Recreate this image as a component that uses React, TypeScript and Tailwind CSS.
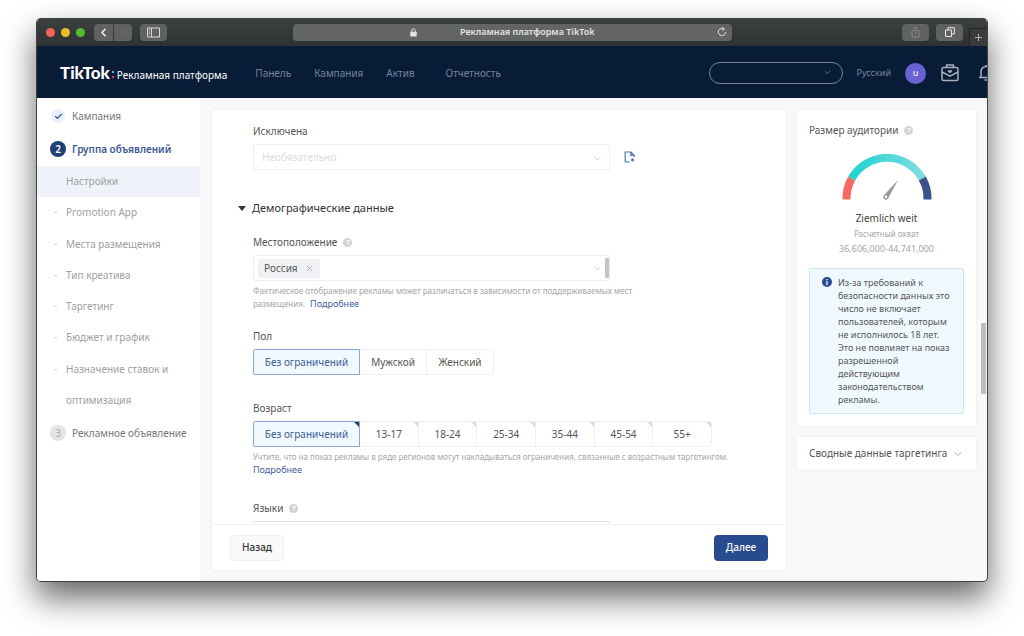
import type { ReactNode } from "react";
import { Check, ChevronDown, ChevronLeft, ChevronRight, Plus, X } from "lucide-react";

const navItems = ["Панель", "Кампания", "Актив", "Отчетность"];

const steps = [
    "Promotion App",
    "Места размещения",
    "Тип креатива",
    "Таргетинг",
    "Бюджет и график",
];

const ages = ["13-17", "18-24", "25-34", "35-44", "45-54", "55+"];

function Help() {
    return (
        <span className="flex h-[9px] w-[9px] items-center justify-center rounded-full bg-[#d2d2d2] text-[7px] font-bold leading-none text-white">
            ?
        </span>
    );
}

function TitleBar() {
    return (
        <div className="flex h-7 shrink-0 items-center bg-gradient-to-b from-[#3d4140] to-[#2f3132] pl-[9px]">
            <div className="flex gap-[6px]">
                <span className="h-[9px] w-[9px] rounded-full bg-[#f9605a]" />
                <span className="h-[9px] w-[9px] rounded-full bg-[#e5c02b]" />
                <span className="h-[9px] w-[9px] rounded-full bg-[#55bb2e]" />
            </div>
            <div className="ml-[9px] flex h-[17px] gap-px">
                <button aria-label="Назад" className="flex w-[19px] items-center justify-center rounded-l-sm bg-[#606261] text-[#eee]">
                    <ChevronLeft size={13} strokeWidth={3} />
                </button>
                <button aria-label="Вперед" className="flex w-[18px] items-center justify-center rounded-r-sm bg-[#606261] text-[#777978]">
                    <ChevronRight size={12} />
                </button>
            </div>
            <button aria-label="Боковая панель" className="ml-2 flex h-[17px] w-[27px] items-center justify-center rounded-sm bg-[#606261]">
                <svg width="13" height="11" viewBox="0 0 13 11" fill="none" stroke="#d8d8d8">
                    <path d="M.5 1h12v9H.5zM4.5 1v9M1.8 3h1.4M1.8 5h1.4M1.8 7h1.4" />
                </svg>
            </button>
            <div className="ml-[126px] flex h-[17px] min-w-0 flex-1 items-center rounded-sm bg-[#636564] pl-[117px] pr-[5px] text-[#e4e4e4]">
                <svg width="7" height="9" viewBox="0 0 7 9">
                    <path d="M1.8 4V2.5a1.7 1.7 0 0 1 3.4 0V4" fill="none" stroke="currentColor" />
                    <rect x=".3" y="3.7" width="6.4" height="4.8" rx=".6" fill="currentColor" />
                </svg>
                <span className="ml-[43px] flex-1 truncate text-[9px] font-semibold">Рекламная платформа TikTok</span>
                <svg width="10" height="10" viewBox="0 0 10 10" fill="none" stroke="currentColor">
                    <path d="M8.5 5A3.6 3.6 0 1 1 7 2.1" />
                    <path d="M5.2.3l2.2 1.9-2.4 1.4" />
                </svg>
            </div>
            <div className="flex w-[255px] shrink-0 items-center justify-end self-stretch">
                <button aria-label="Поделиться" className="flex h-[17px] w-[27px] shrink-0 items-center justify-center rounded-sm bg-[#606261]">
                    <svg width="9" height="12" viewBox="0 0 9 12" fill="none" stroke="#858786">
                        <path d="M3 4.5H1v6.5h7V4.5H6M4.5 8V1M2.5 3l2-2 2 2" />
                    </svg>
                </button>
                <button aria-label="Вкладки" className="ml-[7px] flex h-[17px] w-[27px] shrink-0 items-center justify-center rounded-sm bg-[#606261]">
                    <svg width="10" height="10" viewBox="0 0 10 10" fill="none" stroke="#e8e8e8">
                        <path d="M.5 3h6v6.5h-6zM3 3V.7h6.3V7H6.6" />
                    </svg>
                </button>
                <button aria-label="Новая вкладка" className="ml-[6px] flex h-[18px] w-[18px] shrink-0 items-center justify-center self-end border-l border-t border-[#222] bg-[#3a3c3c] text-[#bbb]">
                    <Plus size={11} strokeWidth={2} />
                </button>
            </div>
        </div>
    );
}

function Header() {
    return (
        <header className="flex h-[52px] shrink-0 items-center overflow-hidden bg-[#081c37] pl-[23px] pt-[2px] text-[10px] text-[#75839a]">
            <div className="flex shrink-0 items-baseline text-white">
                <span className="font-['Lato',sans-serif] text-[17px] font-black">TikTok</span>
                <svg width="3" height="8" viewBox="0 0 3 8" className="ml-[2px]">
                    <rect width="2" height="2" fill="#3fc3c9" />
                    <rect y="5" width="2" height="2" fill="#e0405f" />
                </svg>
                <span className="ml-[2px] whitespace-nowrap">Рекламная платформа</span>
            </div>
            <nav className="ml-[28px] flex gap-[23px]">
                {navItems.map((item) => (
                    <a key={item} href="#" className="last:ml-2">
                        {item}
                    </a>
                ))}
            </nav>
            <div className="ml-auto flex shrink-0 items-center">
                <div className="relative">
                    <select aria-label="Аккаунт" className="block h-[22px] w-[134px] appearance-none rounded-full border border-[#75839a] bg-transparent">
                        <option></option>
                    </select>
                    <ChevronDown size={9} className="pointer-events-none absolute right-[11px] top-[6px]" />
                </div>
                <a href="#" className="ml-[14px] text-[9px]">
                    Русский
                </a>
                <span className="ml-[14px] flex h-[21px] w-[21px] items-center justify-center rounded-full bg-[#6a62d2] text-[9px] text-white">
                    u
                </span>
                <a href="#" aria-label="Бизнес-центр" className="ml-[15px]">
                    <svg width="18" height="18" viewBox="0 0 18 18" fill="none" stroke="#a9b0bc" strokeWidth="1.5" strokeLinejoin="round">
                        <rect x="1" y="3.5" width="16" height="13" rx="1.5" />
                        <path d="M5.5 3.5V1h7v2.5M1 8l8 4.2L17 8M7.3 7h3.4L9 8.5z" />
                    </svg>
                </a>
                <a href="#" aria-label="Уведомления" className="-mr-[7px] ml-[19px]">
                    <svg width="16" height="18" viewBox="0 0 16 18" fill="none" stroke="#a9b0bc" strokeWidth="1.5" strokeLinejoin="round">
                        <path d="M1 13.5h14M3 13.5V7.5a5 5 0 0 1 10 0v6M6.5 16h3M8 2.5V1" />
                    </svg>
                </a>
            </div>
        </header>
    );
}

function Sidebar() {
    return (
        <aside className="w-[163px] shrink-0 bg-white text-[10px] text-[#a0a0a0]">
            <a href="#" className="mt-[2px] flex h-8 items-center pl-[14px] text-[#777]">
                <span className="mr-[7px] flex h-[14px] w-[14px] items-center justify-center rounded-full bg-[#eaf0fb] text-[#31528f]">
                    <Check size={9} strokeWidth={3} />
                </span>
                Кампания
            </a>
            <a href="#" className="flex h-[34px] items-center pl-[13px] font-semibold text-[#3a5795]">
                <span className="mr-[6px] flex h-4 w-4 items-center justify-center rounded-full bg-[#1f3f7a] text-white">
                    2
                </span>
                Группа объявлений
            </a>
            <div className="flex h-[250px] flex-col">
                <a href="#" className="flex flex-1 items-center bg-[#eff3f9] pl-[29px]">
                    Настройки
                </a>
                {steps.map((step) => (
                    <a key={step} href="#" className="flex flex-1 items-center pl-[17px]">
                        <span className="mr-[9px] h-px w-[3px] bg-[#d5d5d5]" />
                        {step}
                    </a>
                ))}
                <a href="#" className="flex flex-[2] pl-[17px] leading-[31px]">
                    <span className="mr-[9px] mt-[15px] h-px w-[3px] bg-[#d5d5d5]" />
                    <span className="w-[110px]">Назначение ставок и оптимизация</span>
                </a>
            </div>
            <a href="#" className="flex h-[34px] items-center pl-[13px] text-[#777]">
                <span className="mr-[6px] flex h-4 w-4 items-center justify-center rounded-full bg-[#e4e4e4] text-[#aaa]">
                    3
                </span>
                Рекламное объявление
            </a>
        </aside>
    );
}

function Option({ children, active, corner }: { children: ReactNode; active?: boolean; corner?: boolean }) {
    return (
        <button
            aria-pressed={!!active}
            className={
                active
                    ? "relative w-[107px] rounded-l-xs border border-[#8ba6cf] bg-[#f0f9ff] text-[#3f5f99]"
                    : "relative flex-1 border-y border-r border-[#f0f0f0] text-[#555] last:rounded-r-sm"
            }
        >
            {children}
            {corner && (
                <svg
                    width="5"
                    height="5"
                    viewBox="0 0 5 5"
                    className={active ? "absolute right-0 top-0 text-[#1f3f7a]" : "absolute right-0 top-0 text-[#dcdcdc]"}
                >
                    <path d="M0 0h5v5z" fill="currentColor" />
                </svg>
            )}
        </button>
    );
}

function Form() {
    return (
        <main className="flex min-w-0 flex-1 flex-col bg-white shadow-[0_0_3px_rgba(0,0,0,0.05)]">
            <div className="min-h-0 flex-1 overflow-hidden pl-[41px] pt-[13px] text-[10px] leading-4 text-[#555]">
                <label htmlFor="excluded" className="block">
                    Исключена
                </label>
                <div className="mt-[5px] flex items-center">
                    <div className="relative w-[357px]">
                        <select id="excluded" className="block h-[26px] w-full appearance-none rounded-xs border border-[#eee] pl-2 text-[#dcdcdc]">
                            <option>Необязательно</option>
                        </select>
                        <ChevronDown size={11} className="pointer-events-none absolute right-[7px] top-[9px] text-[#ccc]" />
                    </div>
                    <button aria-label="Создать аудиторию" className="ml-[14px]">
                        <svg width="12" height="12" viewBox="0 0 12 12" fill="none" stroke="#4f73b5" strokeWidth="1.2">
                            <path d="M5.5 11H1.2V1H7l3.2 3.2V6M6.8 1v3.4h3.4" />
                            <path d="M6.9 8.9h3.2M8.5 7.3v3.2" strokeWidth="1.5" />
                        </svg>
                    </button>
                </div>

                <h2 className="-ml-[15px] mt-[30px] flex items-center text-[11px] text-[#333]">
                    <svg width="8" height="5" viewBox="0 0 8 5" className="mr-[6px]">
                        <path d="M0 0h8L4 5z" fill="#333" />
                    </svg>
                    Демографические данные
                </h2>

                <div className="mt-[18px] flex items-center gap-[6px]">
                    <label htmlFor="location">Местоположение</label>
                    <Help />
                </div>
                <div className="mt-[5px] flex h-[26px] w-[357px] items-center rounded-xs border border-[#eee] pl-1">
                    <span className="flex h-[19px] items-center rounded-xs bg-[#eff1f4] px-[6px]">
                        Россия
                        <button aria-label="Удалить" className="ml-[7px] text-[#999]">
                            <X size={9} />
                        </button>
                    </span>
                    <input id="location" className="min-w-0 flex-1 outline-none" />
                    <ChevronDown size={11} className="text-[#ccc]" />
                    <span className="ml-[2px] h-5 w-1 bg-[#c4c4c4]" />
                </div>
                <p className="mt-[3px] w-[410px] text-[8px] leading-[13px] text-[#a5a5a5]">
                    Фактическое отображение рекламы может различаться в зависимости от поддерживаемых мест размещения.{" "}
                    <a href="#" className="ml-[3px] inline-block text-[9px] text-[#41609c]">
                        Подробнее
                    </a>
                </p>

                <p className="mt-[18px]">Пол</p>
                <div className="mt-[5px] flex h-[26px] w-[241px]">
                    <Option active>Без ограничений</Option>
                    <Option>Мужской</Option>
                    <Option>Женский</Option>
                </div>

                <p className="mt-[25px]">Возраст</p>
                <div className="mt-[5px] flex h-[26px] w-[459px]">
                    <Option active corner>
                        Без ограничений
                    </Option>
                    {ages.map((age) => (
                        <Option key={age} corner>
                            {age}
                        </Option>
                    ))}
                </div>
                <p className="mt-[3px] w-[505px] text-[8px] leading-[13px] text-[#a5a5a5]">
                    Учтите, что на показ рекламы в ряде регионов могут накладываться ограничения, связанные с возрастным таргетингом.{" "}
                    <a href="#" className="inline-block text-[9px] text-[#41609c]">
                        Подробнее
                    </a>
                </p>

                <div className="mt-6 flex items-center gap-[6px]">
                    <label htmlFor="languages">Языки</label>
                    <Help />
                </div>
                <select id="languages" className="mt-[5px] block h-[26px] w-[357px] appearance-none rounded-xs border border-[#e4e4e4]">
                    <option></option>
                </select>
            </div>
            <div className="flex h-[46px] shrink-0 items-center justify-between border-t border-[#f2f2f2] px-[18px] text-[10px] font-medium">
                <button className="h-[26px] w-[54px] rounded-sm border border-[#eee] bg-[#fafafa] text-[#333]">Назад</button>
                <button className="h-[26px] w-[54px] rounded-sm bg-[#284b8f] text-white">Далее</button>
            </div>
        </main>
    );
}

function Gauge() {
    return (
        <svg width="90" height="46" viewBox="0 0 90 46" fill="none" strokeWidth="8" className="mx-auto">
            <defs>
                <linearGradient id="reach" x1="0" x2="1">
                    <stop offset="0" stopColor="#1ed3d4" />
                    <stop offset="1" stopColor="#7fdcdf" />
                </linearGradient>
            </defs>
            <path d="M4.5 45.5A40.5 40.5 0 0 1 9.7 24.500" stroke="#f56a60" />
            <path d="M9.700 24.500A40.500 40.500 0 0 1 80.300 24.500" stroke="url(#reach)" />
            <path d="M80.300 24.500A40.500 40.500 0 0 1 85.500 45.500" stroke="#3c5389" />
            <path d="M56 26L42 41.200a2.600 2.600 0 1 0 4.300 2.800z" fill="#999" stroke="none" />
            <circle cx="44" cy="42.800" r="1.300" fill="#fff" stroke="none" />
        </svg>
    );
}

function Audience() {
    return (
        <aside className="w-[179px] shrink-0 text-[10px] text-[#555]">
            <section className="bg-white px-3 pb-3 pt-3 shadow-[0_0_3px_rgba(0,0,0,0.05)]">
                <h2 className="flex items-center gap-[6px] leading-4">
                    Размер аудитории
                    <Help />
                </h2>
                <div className="mt-4">
                    <Gauge />
                </div>
                <div className="text-center">
                    <p className="mt-[10px] leading-4 text-[#444]">Ziemlich weit</p>
                    <p className="text-[8px] leading-[15px] text-[#a5a5a5]">Расчетный охват</p>
                    <p className="text-[9px] leading-[15px] text-[#a5a5a5]">36,606,000-44,741,000</p>
                </div>
                <div className="mt-3 flex rounded-xs border border-[#cfe6f5] bg-[#f0f9ff] py-[7px] pl-3">
                    <svg width="10" height="10" viewBox="0 0 10 10" className="mt-[1px] shrink-0">
                        <circle cx="5" cy="5" r="5" fill="#284b8f" />
                        <path d="M5 2v1.300M5 4.300V8" stroke="#fff" strokeWidth="1.300" />
                    </svg>
                    <p className="ml-[6px] w-[118px] text-[9px] leading-[13px]">
                        Из-за требований к безопасности данных это число не включает пользователей, которым не исполнилось 18 лет. Это
                        не повлияет на показ разрешенной действующим законодательством рекламы.
                    </p>
                </div>
            </section>
            <button className="mt-[11px] flex h-[33px] w-full items-center justify-between bg-white px-3 shadow-[0_0_3px_rgba(0,0,0,0.05)]">
                Сводные данные таргетинга
                <ChevronDown size={12} className="text-[#aaa]" />
            </button>
        </aside>
    );
}

export default function App() {
    return (
        <div className="h-screen bg-white px-[36px] pb-[54px] pt-[18px] font-['Noto_Sans',sans-serif]">
            <div className="relative flex h-full flex-col overflow-hidden rounded-[5px] border-x border-b border-[#3f4342] bg-[#f8f8fb] shadow-[0_16px_32px_rgba(0,0,0,0.6)]">
                <TitleBar />
                <Header />
                <div className="flex min-h-0 flex-1">
                    <Sidebar />
                    <div className="flex min-w-0 flex-1 items-start gap-[11px] pl-3 pr-[11px] pt-3">
                        <div className="flex h-full min-w-0 flex-1 pb-[11px]">
                            <Form />
                        </div>
                        <Audience />
                    </div>
                </div>
                <span className="absolute right-px top-[305px] h-[71px] w-[5px] bg-[#bdbdbd]" />
            </div>
        </div>
    );
}
